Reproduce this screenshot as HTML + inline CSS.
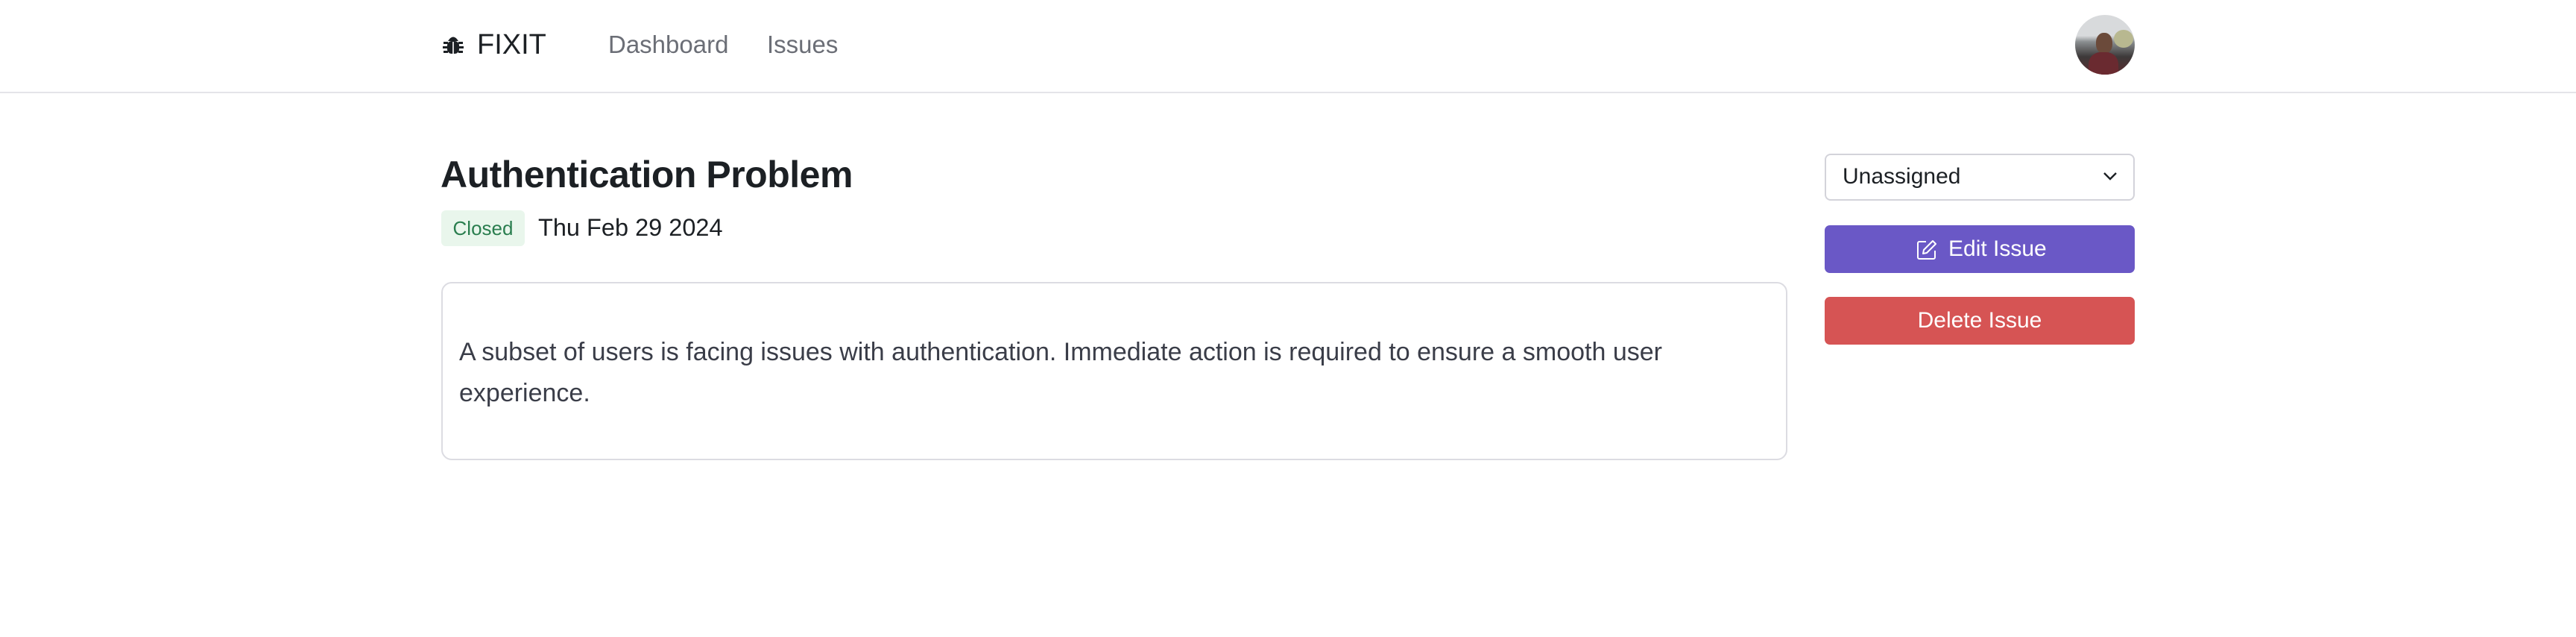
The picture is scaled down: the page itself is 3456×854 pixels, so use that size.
<!DOCTYPE html>
<html><head><meta charset="utf-8"><style>
*{box-sizing:border-box;margin:0;padding:0}
body{width:3456px;height:854px;background:#fff;font-family:"Liberation Sans",sans-serif;position:relative;overflow:hidden;color:#1c2024}
.a{position:absolute;white-space:nowrap}
</style></head><body>
<div class="a" style="left:0;top:123px;width:3456px;height:2px;background:#e4e4e9"></div>
<svg class="a" style="left:594px;top:45px" width="28" height="28" viewBox="0 0 28 28"><g fill="#1c2024"><path d="M7 10 Q14 -1 21 10Z"/><rect x="6" y="10" width="16" height="17" rx="6"/><rect x="1" y="11" width="6" height="3"/><rect x="21" y="11" width="6" height="3"/><rect x="0" y="17" width="7" height="3"/><rect x="21" y="17" width="7" height="3"/><rect x="1" y="23" width="6" height="3"/><rect x="21" y="23" width="6" height="3"/></g><rect x="13.2" y="11" width="1.6" height="16" fill="#fff"/></svg>
<div class="a" style="left:640px;top:38px;font-size:38px;line-height:44px;color:#1c2024">FIXIT</div>
<div class="a" style="left:816px;top:40px;font-size:33px;line-height:40px;color:#6b6e76">Dashboard</div>
<div class="a" style="left:1029px;top:40px;font-size:33px;line-height:40px;color:#6b6e76">Issues</div>
<div class="a" style="left:2784px;top:20px;width:80px;height:80px;border-radius:50%;overflow:hidden;background:linear-gradient(180deg,#d8dadc 0%,#d8dadc 35%,#8a8e90 45%,#3d3a3a 70%,#5a2a2e 100%)">
<div style="position:absolute;left:28px;top:24px;width:22px;height:28px;border-radius:45%;background:#6b4a3a"></div>
<div style="position:absolute;left:18px;top:50px;width:40px;height:40px;border-radius:40%;background:#6a2a30"></div>
<div style="position:absolute;left:52px;top:20px;width:26px;height:24px;border-radius:50%;background:#b8b890"></div>
</div>
<div class="a" style="left:591px;top:205px;font-size:50px;font-weight:bold;line-height:58px;color:#1c2024;letter-spacing:-0.5px">Authentication Problem</div>
<div class="a" style="left:592px;top:282px;width:112px;height:48px;border-radius:6px;background:#e9f6ec;color:#2a7e4f;font-size:26px;line-height:48px;text-align:center">Closed</div>
<div class="a" style="left:722px;top:285px;font-size:32.5px;line-height:40px;color:#1c2024">Thu Feb 29 2024</div>
<div class="a" style="left:592px;top:378px;width:1806px;height:239px;border:2px solid #dcdce2;border-radius:14px"></div>
<div class="a" style="left:616px;top:445px;font-size:34px;line-height:55px;color:#3a3d48">A subset of users is facing issues with authentication. Immediate action is required to ensure a smooth user<br>experience.</div>
<div class="a" style="left:2448px;top:206px;width:416px;height:63px;border:2px solid #d3d3da;border-radius:8px"></div>
<div class="a" style="left:2472px;top:216px;font-size:30px;line-height:42px;color:#1c2024">Unassigned</div>
<svg class="a" style="left:2820px;top:228px" width="22" height="16" viewBox="0 0 22 16"><path d="M3 4 L11 12 L19 4" fill="none" stroke="#1c2024" stroke-width="2.4"/></svg>
<div class="a" style="left:2448px;top:302px;width:416px;height:64px;border-radius:7px;background:#6a58c6"></div>
<svg class="a" style="left:2571px;top:320px" width="30" height="30" viewBox="0 0 30 30"><path d="M13 4 H4 a2 2 0 0 0 -2 2 V25 a2 2 0 0 0 2 2 H23 a2 2 0 0 0 2 -2 V16" fill="none" stroke="#fff" stroke-width="2"/><path d="M22 3 L26 7 L14 19 L9 20 L10 15 Z" fill="none" stroke="#fff" stroke-width="2" stroke-linejoin="round"/></svg>
<div class="a" style="left:2614px;top:313px;font-size:30px;line-height:42px;color:#fff">Edit Issue</div>
<div class="a" style="left:2448px;top:398px;width:416px;height:64px;border-radius:7px;background:#d65454;color:#fff;font-size:30px;line-height:64px;text-align:center">Delete Issue</div>
</body></html>
